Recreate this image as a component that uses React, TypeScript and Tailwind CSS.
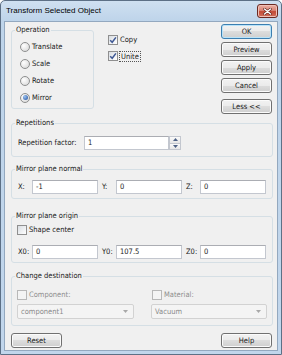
import React from "react";

function Radio({ label, checked }: { label: string; checked?: boolean }) {
  return (
    <div className="h-[17px] flex items-center gap-[2px] pl-[8px]">
      <span className="w-[10px] h-[10px] rounded-full border border-[#8e8f8f] bg-[radial-gradient(circle_at_35%_35%,#ffffff,#d4d4d4)] flex items-center justify-center">
        {checked && (
          <span className="w-[5px] h-[5px] rounded-full bg-[radial-gradient(circle_at_35%_35%,#9cc3f0,#1d4d9e)]" />
        )}
      </span>
      <span>{label}</span>
    </div>
  );
}

function Check({ checked, disabled }: { checked?: boolean; disabled?: boolean }) {
  return (
    <span
      className={
        disabled
          ? "w-[10px] h-[10px] border border-[#b8b8b8] bg-[#f4f4f4] shrink-0"
          : "w-[10px] h-[10px] border border-[#8f8f8f] bg-[linear-gradient(135deg,#d9dde2,#ffffff)] shrink-0 flex items-center justify-center"
      }
    >
      {checked && (
        <svg width="8" height="8" viewBox="0 0 8 8">
          <path d="M1.2 4.2 L3.2 6.3 L6.9 1.4" stroke="#3e5894" strokeWidth="1.5" fill="none" />
        </svg>
      )}
    </span>
  );
}

function Btn({ children, def }: { children: React.ReactNode; def?: boolean }) {
  return (
    <div
      className={
        def
          ? "h-[15px] w-[51px] rounded-[3px] border border-[#3c7fb1] bg-[linear-gradient(#f2f2f2_0%,#ebebeb_50%,#dddddd_50%,#cfcfcf_100%)] shadow-[inset_0_0_0_1px_#b9e3f9] flex items-center justify-center"
          : "h-[15px] w-[51px] rounded-[3px] border border-[#707070] bg-[linear-gradient(#f2f2f2_0%,#ebebeb_50%,#dddddd_50%,#cfcfcf_100%)] shadow-[inset_0_0_0_1px_#fbfbfb] flex items-center justify-center"
      }
    >
      {children}
    </div>
  );
}

function Input({ value, w }: { value: string; w: string }) {
  return (
    <div
      className={
        "h-[14px] border border-[#c3c7cf] border-t-[#abadb3] bg-white pl-[3px] flex items-center " + w
      }
    >
      {value}
    </div>
  );
}

function Coord({ label, value }: { label: string; value: string }) {
  return (
    <div className="w-[80px] flex items-center">
      <span className="flex-1">{label}</span>
      <div className="w-[66px] h-[14px] border border-[#c3c7cf] border-t-[#abadb3] bg-white pl-[3px] flex items-center">
        {value}
      </div>
    </div>
  );
}

function Legend({ children }: { children: React.ReactNode }) {
  return (
    <div className="-mt-[6px] ml-[3px] px-[1px] w-fit h-[10px] bg-[#f0f0f0]">{children}</div>
  );
}

function Combo({ value, w }: { value: string; w: string }) {
  return (
    <div
      className={
        "h-[15px] border border-[#d2d2d2] bg-[#f4f4f4] rounded-[2px] pl-[3px] pr-[5px] flex items-center text-[#8a8a8a] " + w
      }
    >
      <span className="flex-1">{value}</span>
      <svg width="5" height="3" viewBox="0 0 5 3">
        <path d="M0 0 H5 L2.5 3 Z" fill="#a8a8a8" />
      </svg>
    </div>
  );
}

export default function App() {
  return (
    <div className="w-[282px] h-[355px] font-['DejaVu_Sans_Condensed','DejaVu_Sans',sans-serif] text-[7.5px] leading-[10px] text-[#1a1a1a]">
      <div className="w-full h-full border border-[#5d7086] rounded-t-[5px] bg-[linear-gradient(180deg,#cfe0f1_0px,#bed4ea_20px,#c1d6ec_100%)] flex flex-col">
        {/* title bar */}
        <div className="h-[20px] flex items-start pl-[5px] pr-[3px]">
          <span className="mt-[5px] font-['Liberation_Sans',sans-serif] text-[8px] leading-[10px] text-black">
            Transform Selected Object
          </span>
          <div className="ml-auto mt-[3px] w-[21px] h-[14px] rounded-[3px] border border-[#6b2a22] bg-[linear-gradient(#ebb1a6_0%,#d98677_45%,#c24a36_55%,#d2725f_100%)] shadow-[inset_0_0_0_1px_#f0c0b6] flex items-center justify-center">
            <svg width="9" height="7" viewBox="0 0 9 7">
              <path d="M1.5 1 L7.5 6 M7.5 1 L1.5 6" stroke="#5a1f18" strokeWidth="2.6" strokeLinecap="round" />
              <path d="M1.5 1 L7.5 6 M7.5 1 L1.5 6" stroke="#ffffff" strokeWidth="1.5" strokeLinecap="round" />
            </svg>
          </div>
        </div>

        {/* content */}
        <div className="flex-1 mx-[3px] mb-[3px] border border-[#93a8bf] bg-[#f0f0f0] flex flex-col pl-[6px] pr-[5px] pt-[2px]">
          {/* top section */}
          <div className="h-[92px] flex items-start">
            <div className="mt-[6px] w-[83px] h-[79px] border border-[#d5dfe5] rounded-[3px]">
              <Legend>Operation</Legend>
              <div className="mt-[3px]">
                <Radio label="Translate" />
                <Radio label="Scale" />
                <Radio label="Rotate" />
                <Radio label="Mirror" checked />
              </div>
            </div>
            <div className="ml-[14px] pt-[8px] flex flex-col">
              <div className="h-[16px] flex items-center gap-[2px]">
                <Check checked />
                <span>Copy</span>
              </div>
              <div className="h-[16px] flex items-center gap-[1px]">
                <Check checked />
                <span className="border border-dotted border-[#555] px-[1px] leading-[9px]">Unite</span>
              </div>
            </div>
            <div className="ml-auto flex flex-col gap-[3px]">
              <Btn def>OK</Btn>
              <Btn>Preview</Btn>
              <Btn>Apply</Btn>
              <Btn>Cancel</Btn>
              <div className="mt-[3px]">
                <Btn>Less &lt;&lt;</Btn>
              </div>
            </div>
          </div>

          {/* Repetitions */}
          <div className="mt-[7px] w-[262px] h-[34px] border border-[#d5dfe5] rounded-[3px]">
            <Legend>Repetitions</Legend>
            <div className="mt-[8px] pl-[6px] flex items-center">
              <span className="w-[66px]">Repetition factor:</span>
              <Input value="1" w="w-[85px]" />
              <div className="w-[12px] h-[14px] border border-[#c3c7cf] bg-[#f4f4f4] flex flex-col">
                <div className="flex-1 border-b border-[#c3c7cf] bg-[linear-gradient(#fbfbfb,#e6e6e6)] flex items-center justify-center">
                  <svg width="5" height="3" viewBox="0 0 5 3">
                    <path d="M0 3 H5 L2.5 0 Z" fill="#4d6185" />
                  </svg>
                </div>
                <div className="flex-1 bg-[linear-gradient(#fbfbfb,#e6e6e6)] flex items-center justify-center">
                  <svg width="5" height="3" viewBox="0 0 5 3">
                    <path d="M0 0 H5 L2.5 3 Z" fill="#4d6185" />
                  </svg>
                </div>
              </div>
            </div>
          </div>

          {/* Mirror plane normal */}
          <div className="mt-[12px] w-[262px] h-[30px] border border-[#d5dfe5] rounded-[3px]">
            <Legend>Mirror plane normal</Legend>
            <div className="mt-[6px] pl-[6px] flex items-center gap-[4px]">
              <Coord label="X:" value="-1" />
              <Coord label="Y:" value="0" />
              <Coord label="Z:" value="0" />
            </div>
          </div>

          {/* Mirror plane origin */}
          <div className="mt-[17px] w-[262px] h-[47px] border border-[#d5dfe5] rounded-[3px]">
            <Legend>Mirror plane origin</Legend>
            <div className="mt-[3px] pl-[5px] h-[12px] flex items-center gap-[2px]">
              <Check />
              <span>Shape center</span>
            </div>
            <div className="mt-[9px] pl-[6px] flex items-center gap-[4px]">
              <Coord label="X0:" value="0" />
              <Coord label="Y0:" value="107.5" />
              <Coord label="Z0:" value="0" />
            </div>
          </div>

          {/* Change destination */}
          <div className="mt-[13px] w-[262px] h-[50px] border border-[#d5dfe5] rounded-[3px]">
            <Legend>Change destination</Legend>
            <div className="pl-[5px] flex gap-[17px]">
              <div className="w-[117px] flex flex-col">
                <div className="mt-[8px] h-[12px] flex items-center gap-[2px] text-[#8d8d8d]">
                  <Check disabled />
                  <span>Component:</span>
                </div>
                <div className="mt-[3px]">
                  <Combo value="component1" w="w-[117px]" />
                </div>
              </div>
              <div className="w-[116px] flex flex-col">
                <div className="mt-[8px] pl-[1px] h-[12px] flex items-center gap-[2px] text-[#8d8d8d]">
                  <Check disabled />
                  <span>Material:</span>
                </div>
                <div className="mt-[3px]">
                  <Combo value="Vacuum" w="w-[116px]" />
                </div>
              </div>
            </div>
          </div>

          {/* bottom buttons */}
          <div className="mt-[7px] flex">
            <Btn>Reset</Btn>
            <div className="ml-auto">
              <Btn>Help</Btn>
            </div>
          </div>
        </div>
      </div>
    </div>
  );
}
